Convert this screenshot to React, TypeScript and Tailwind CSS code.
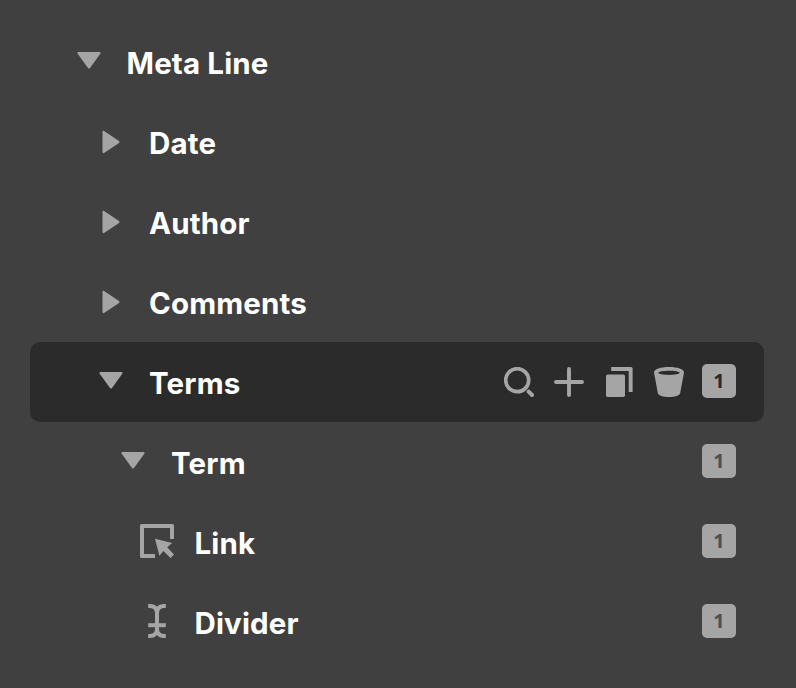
import type { ReactNode } from "react";

const Down = () => (
  <svg width="34" height="34" viewBox="0 0 34 34" className="block shrink-0 fill-[#a5a5a5]">
    <path d="M6.500 8H27.400C28.500 8 28.900 9 28.300 9.800L18 24Q17 25.200 16 24L5.700 9.800C5.100 9 5.500 8 6.500 8Z" />
  </svg>
);

const Right = () => (
  <svg width="34" height="34" viewBox="0 0 34 34" className="block shrink-0 fill-[#a5a5a5]">
    <path d="M8.500 8V28C8.500 29.200 9.500 29.500 10.400 28.800L25 18.900Q26.200 18 25 17.100L10.400 7.200C9.500 6.500 8.500 6.800 8.500 8Z" />
  </svg>
);

const LinkIcon = () => (
  <svg width="34" height="34" viewBox="0 0 34 34" className="block shrink-0 fill-[#a5a5a5]">
    <path d="M1.500 0H32.500Q34 0 34 1.500V15H30V4H4V30H15V34H1.500Q0 34 0 32.500V1.500Q0 0 1.500 0Z" />
    <path d="M15 14.800L32.200 19.100L27.200 23.300L34 30.500L30.500 34L23.500 27.100L19.400 31.800Z" />
  </svg>
);

const DividerIcon = () => (
  <svg width="34" height="34" viewBox="0 0 34 34" fill="none" className="block shrink-0 stroke-[#a5a5a5]" strokeWidth="4">
    <path d="M8.200 2H10.500Q17 2.500 17 9V25Q17 31.500 10.500 32H8.200" />
    <path d="M25.800 2H23.500Q17 2.500 17 9V25Q17 31.500 23.500 32H25.800" />
    <path d="M8.200 21.200H25.800" />
  </svg>
);

const Badge = ({ dark = false }: { dark?: boolean }) => (
  <span
    className={`mb-0.5 flex size-[34px] items-center justify-center rounded-[5px] bg-[#a5a5a5] font-[Noto_Sans,sans-serif] text-[20px] font-bold leading-[34px] tracking-normal ${
      dark ? "text-[#2b2b2b]" : "text-[#505050]"
    }`}
  >
    1
  </span>
);

const Actions = () => (
  <div className="mr-[18px] flex items-center gap-5">
    <svg width="30" height="30" viewBox="0 0 30 30" fill="none" stroke="#a5a5a5">
      <circle cx="13.200" cy="13.200" r="11.500" strokeWidth="3.700" />
      <path d="M24.700 24.700L28 28" strokeWidth="4" strokeLinecap="round" />
    </svg>
    <svg width="30" height="30" viewBox="0 0 30 30" fill="none" stroke="#a5a5a5">
      <path d="M15 2V28M2 15H28" strokeWidth="3.900" strokeLinecap="round" />
    </svg>
    <svg width="30" height="30" viewBox="0 0 30 30" fill="#a5a5a5">
      <rect x="2" y="7.500" width="19" height="22.500" rx="1.800" />
      <path d="M7.200 0H27Q28.600 0 28.600 1.500V25H24.700V4H7.200Z" />
    </svg>
    <svg width="30" height="30" viewBox="0 0 30 30" fill="#a5a5a5">
      <path
        fillRule="evenodd"
        d="M15 0C23.500 0 30 2.200 30 5.500L26.200 26C25.600 28.800 20.800 30 15 30S4.400 28.800 3.800 26L0 5.500C0 2.200 6.500 0 15 0ZM15 3.700C9.500 3.700 4.200 4.600 4.200 5.800S9.500 7.900 15 7.900S25.800 7 25.800 5.800S20.500 3.700 15 3.700Z"
      />
    </svg>
  </div>
);

type RowProps = {
  label: string;
  indent: string;
  gap: string;
  icon: ReactNode;
  active?: boolean;
  badge?: boolean;
};

const Row = ({ label, indent, gap, icon, active = false, badge = false }: RowProps) => (
  <li className={`flex h-20 items-center rounded-[10px] pr-7 ${indent} ${active ? "bg-[#2b2b2b]" : ""}`}>
    <span className="mb-0.5">{icon}</span>
    <span className={`whitespace-nowrap pt-0.5 ${gap}`}>{label}</span>
    <div className="ml-auto flex items-center">
      {active && <Actions />}
      {badge && <Badge dark={active} />}
    </div>
  </li>
);

export default function App() {
  return (
    <main className="h-[688px] w-[796px] bg-[#404040] pl-[30px] pr-8 pt-[22px] font-[Inter,sans-serif] text-[29.500px] font-bold leading-10 tracking-[0.150px] text-white antialiased">
      <ul>
        <Row label="Meta Line" indent="pl-[42px]" gap="ml-[20.500px]" icon={<Down />} />
        <Row label="Date" indent="pl-16" gap="ml-[21px]" icon={<Right />} />
        <Row label="Author" indent="pl-16" gap="ml-[21px]" icon={<Right />} />
        <Row label="Comments" indent="pl-16" gap="ml-[21px]" icon={<Right />} />
        <Row label="Terms" indent="pl-16" gap="ml-[21px]" icon={<Down />} active badge />
        <Row label="Term" indent="pl-[86px]" gap="ml-[21px]" icon={<Down />} badge />
        <Row label="Link" indent="pl-[110px]" gap="ml-[20.500px]" icon={<LinkIcon />} badge />
        <Row label="Divider" indent="pl-[110px]" gap="ml-[20.500px]" icon={<DividerIcon />} badge />
      </ul>
    </main>
  );
}
